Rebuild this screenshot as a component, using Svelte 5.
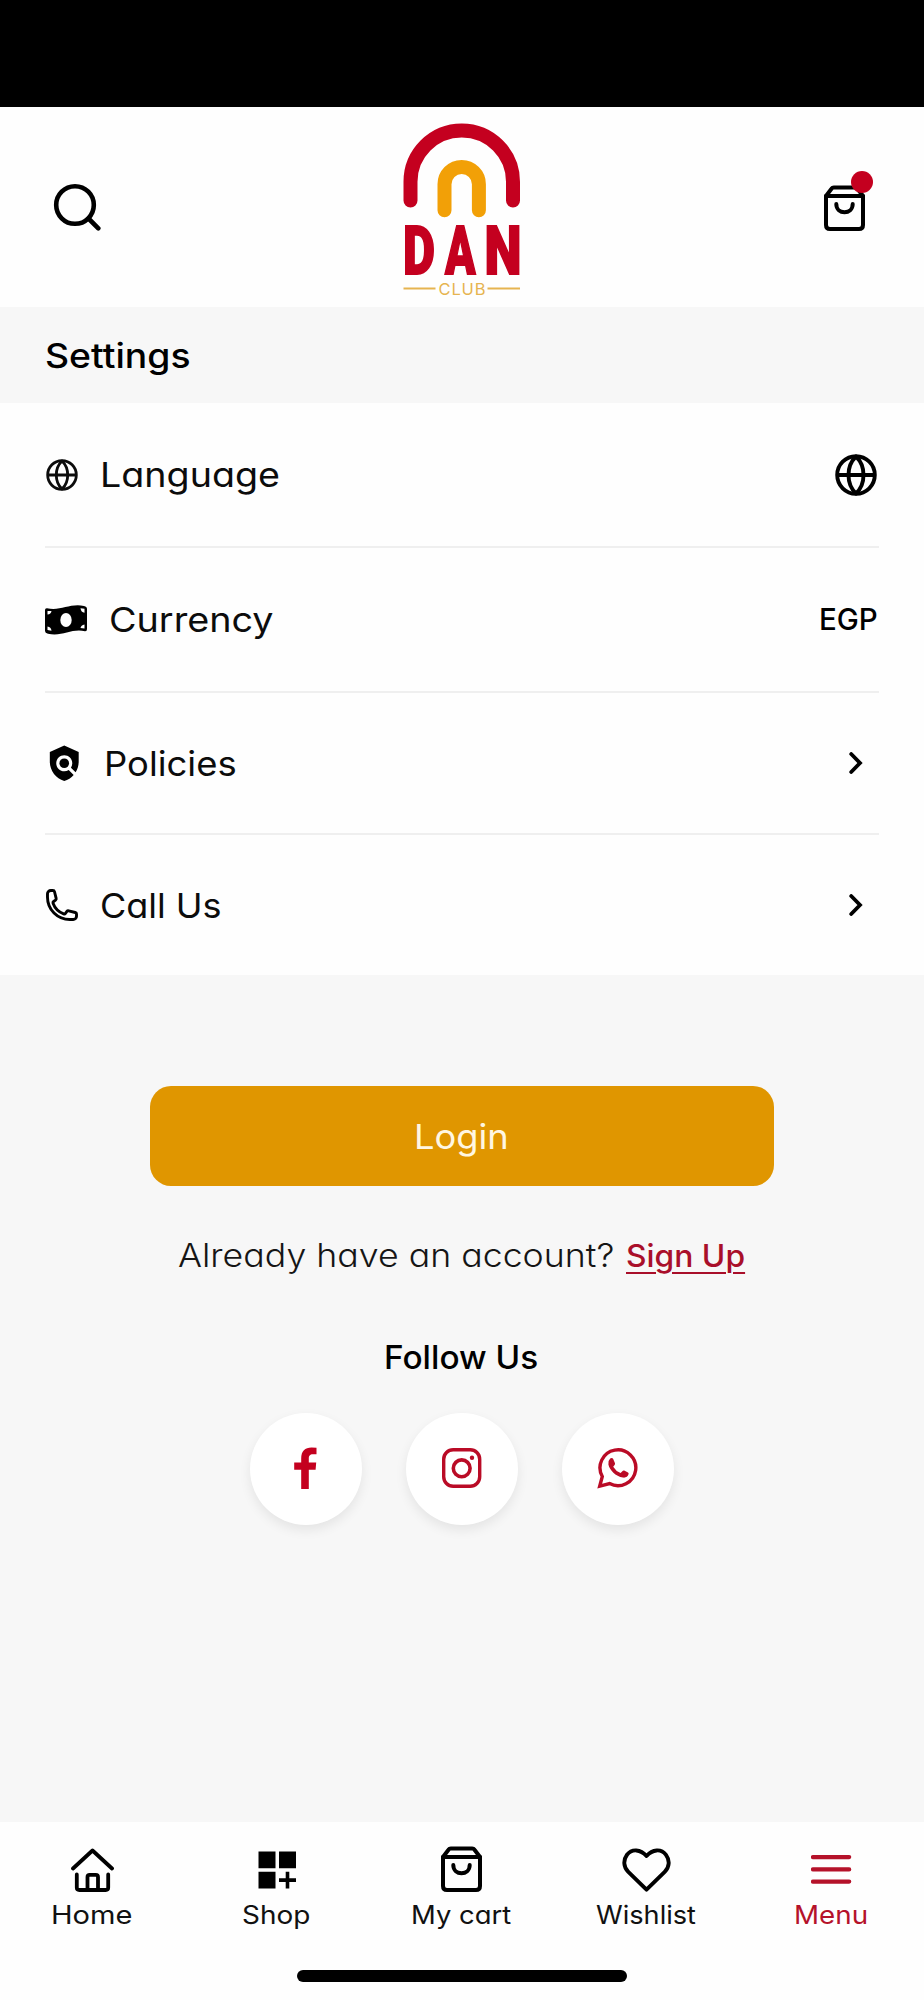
<script>
  // Widens a label horizontally so that it fills the given width.
  function fit(node, width) {
    const inner = node.firstElementChild;
    inner.style.transform = `scaleX(${width / inner.offsetWidth})`;
  }

  const tabs = [
    { id: 'home', label: 'Home', width: 81 },
    { id: 'shop', label: 'Shop', width: 68 },
    { id: 'cart', label: 'My cart', width: 100 },
    { id: 'wish', label: 'Wishlist', width: 100 },
    { id: 'menu', label: 'Menu', width: 74, active: true }
  ];
</script>

{#snippet label(text, width)}
  <span class="fit" style:width="{width}px" use:fit={width}><span>{text}</span></span>
{/snippet}

{#snippet bag()}
  <svg width="41" height="46" viewBox="0 0 41 46" fill="none" stroke="currentColor" stroke-width="4" stroke-linecap="round" stroke-linejoin="round">
    <path d="M2 11 7.500 3.700Q8.300 2.500 9.800 2.500H31.200Q32.700 2.500 33.500 3.700L39 11V40Q39 44 35 44H6Q2 44 2 40Z" />
    <path d="M2 11H39M12.300 19C12.300 30 28.700 30 28.700 19" />
  </svg>
{/snippet}

{#snippet globe(size, weight)}
  <svg width={size} height={size} viewBox="0 0 42 42" fill="none" stroke="currentColor" stroke-width={weight}>
    <circle cx="21" cy="21" r="18.800" />
    <path d="M2 21H40M21 2.500C11 12 11 30 21 39.500C31 30 31 12 21 2.500Z" stroke-linejoin="round" />
  </svg>
{/snippet}

{#snippet chevron()}
  <svg class="chevron" width="14" height="22" viewBox="0 0 14 22" fill="none" stroke="#000" stroke-width="3.800" stroke-linecap="round" stroke-linejoin="miter"><path d="M2.200 2 11 11 2.200 20" /></svg>
{/snippet}

<div class="screen">
  <div class="status"></div>

  <header>
    <button class="search" aria-label="Search">
      <svg width="48" height="48" viewBox="0 0 48 48" fill="none" stroke="#000" stroke-width="4.600" stroke-linecap="round">
        <circle cx="22" cy="22" r="18.800" /><path d="M35.500 35.500 45.300 45.300" />
      </svg>
    </button>
    <svg class="logo" width="124" height="180" viewBox="400 118 124 180">
      <g fill="none" stroke-width="14" stroke-linecap="round">
        <path stroke="#c4001f" d="M410.500 199.500V180.700A51.250 51.250 0 0 1 513 180.700V199.500" />
        <path stroke="#f2a007" d="M444.500 209.300V183.200A17.200 17.200 0 0 1 478.900 183.200V209.300" />
      </g>
      <g class="dan">
        <text x="403" y="273.300" textLength="32" lengthAdjust="spacingAndGlyphs">D</text>
        <text x="445" y="273.300" textLength="30.500" lengthAdjust="spacingAndGlyphs">A</text>
        <text x="484.500" y="273.300" textLength="37" lengthAdjust="spacingAndGlyphs">N</text>
      </g>
      <path stroke="#e6b450" stroke-width="1.800" d="M403.500 287.500H435.500M487.500 287.500H520" />
      <text class="club" x="438.500" y="293.500" textLength="47" lengthAdjust="spacing">CLUB</text>
    </svg>
    <button class="basket" aria-label="Cart">{@render bag()}<i></i></button>
  </header>

  <h1>{@render label('Settings', 146)}</h1>

  <ul>
    <li class="tall">
      <span class="glyph g-lang">{@render globe(32, 3.7)}</span>
      <span class="name">{@render label('Language', 180)}</span>
      <span class="end">{@render globe(42, 3.9)}</span>
    </li>
    <li class="tall">
      <span class="glyph g-cash">
        <svg width="42" height="30" viewBox="0 0 42 30">
          <path fill="#000" d="M0 5Q0 3 2 3.200C15 6.500 25-2 39 1Q42 1.500 42 4V24Q42 26.500 40 26.300C27 23 17 32 3 28.700Q0 28 0 26Z" />
          <ellipse cx="21" cy="15" rx="5.700" ry="7" fill="#fff" />
          <path fill="#fff" d="M2.500 6H6.500Q6 9.300 2.500 9.500ZM2.500 21.500Q6 22 6.500 25.800L2.500 25.100ZM35.500 3.300 39.500 3.800V7.700Q36 7.500 35.500 3.300ZM39.500 19.500V23.500L35.500 23Q36 20 39.500 19.500Z" />
        </svg>
      </span>
      <span class="name">{@render label('Currency', 164)}</span>
      <span class="end code">{@render label('EGP', 59)}</span>
    </li>
    <li class="third">
      <span class="glyph g-policy">
        <svg width="38.500" height="38.500" viewBox="0 0 24 24"><path d="M21 5l-9-4-9 4v6c0 5.550 3.840 10.740 9 12 2.300-.56 4.330-1.900 5.880-3.710l-3.120-3.120c-1.940 1.290-4.580 1.070-6.290-.64-1.950-1.950-1.950-5.120 0-7.070 1.950-1.950 5.120-1.950 7.070 0 1.710 1.710 1.920 4.350.64 6.290l2.900 2.900C20.290 15.690 21 13.380 21 11V5z" /><circle cx="12" cy="12" r="3" /></svg>
      </span>
      <span class="name">{@render label('Policies', 133)}</span>
      <span class="end">{@render chevron()}</span>
    </li>
    <li class="last">
      <span class="glyph g-call">
        <svg width="32" height="32" viewBox="1.250 1.250 21.500 21.500" fill="none" stroke="#000" stroke-width="1.950" stroke-linejoin="round"><path d="M2.250 6.750c0 8.284 6.716 15 15 15h2.250a2.250 2.250 0 0 0 2.250-2.250v-1.372c0-.516-.351-.966-.852-1.091l-4.423-1.106c-.44-.11-.902.055-1.173.417l-.97 1.293c-.282.376-.769.542-1.210.38a12.035 12.035 0 0 1-7.143-7.143c-.162-.441.004-.928.38-1.210l1.293-.97c.363-.271.527-.734.417-1.173L6.963 3.102a1.125 1.125 0 0 0-1.091-.852H4.500A2.250 2.250 0 0 0 2.250 4.500v2.250z" /></svg>
      </span>
      <span class="name">{@render label('Call Us', 122)}</span>
      <span class="end">{@render chevron()}</span>
    </li>
  </ul>

  <main>
    <button class="login">{@render label('Login', 95)}</button>
    <p class="account">{@render label('Already have an account?', 436)}<a href="#signup">{@render label('Sign Up', 119)}</a></p>
    <h2>{@render label('Follow Us', 154)}</h2>
    <div class="social">
      <a href="#facebook" aria-label="Facebook">
        <svg width="42" height="42" viewBox="0 0 42 42"><path fill="#c4001f" d="M16.200 42V22.700H9.200V15.500H16.200V11.500C16.200 3.800 20 .4 26.500 .4Q29.500 .4 31.500 .8V7.300H28C24.800 7.300 23.800 9 23.800 11.800V15.500H31.200L30.600 22.700H23.800V42Z" /></svg>
      </a>
      <a href="#instagram" aria-label="Instagram">
        <svg width="42" height="42" viewBox="0 0 42 42" fill="none" stroke="#ba0b26" stroke-width="3.400"><rect x="2.700" y="2.700" width="36" height="36.600" rx="9.500" /><circle cx="20.700" cy="21.300" r="8.400" stroke-width="3.600" /><circle cx="31" cy="10.800" r="2.200" fill="#ba0b26" stroke="none" /></svg>
      </a>
      <a href="#whatsapp" aria-label="WhatsApp">
        <svg width="42" height="42" viewBox="0 0 42 42"><path fill="none" stroke="#ba0b26" stroke-width="3.400" stroke-linejoin="miter" d="M2.700 39.200 5.300 29.500A17.900 17.900 0 1 1 12.600 36.600Z" /><path fill="#ba0b26" d="M13.200 11.600C14.200 10.800 15.700 10.900 16.200 12L18 16.200Q18.300 17.200 17.400 18.200L16.200 19.700Q18.700 24 23.600 26.100L25.600 23.900Q26.300 23.200 27.200 23.600L31 25.500Q31.900 26 31.600 27.100C31 29.700 28.500 31 26 30.600C18.500 29.300 12.700 23.200 11.400 17.500Q10.900 13.700 13.200 11.600Z" /></svg>
      </a>
    </div>
  </main>

  <nav>
    {#each tabs as tab}
      <a href="#{tab.id}" class:active={tab.active}>
        <span class="pic">
          {#if tab.id === 'home'}
            <svg width="44" height="46" viewBox="0 0 44 46" fill="none" stroke="#000" stroke-width="3.800" stroke-linecap="round" stroke-linejoin="round"><path d="M3 22.500 22.500 4.500 42 22.500M6.800 28.500V41.500Q6.800 44 9.300 44H35.700Q38.200 44 38.200 41.500V28.500M17.500 43.500V31Q17.500 28.800 19.700 28.800H25.800Q28 28.800 28 31V43.500" /></svg>
          {:else if tab.id === 'shop'}
            <svg width="38" height="46" viewBox="0 0 38 46"><path d="M.5 5.500H17.500V22.300H.5ZM21 5.500H38V22.300H21ZM.5 25.700H17.500V42.500H.5ZM27.700 25.700H31.300V32.300H38V35.900H31.300V42.500H27.700V35.900H21V32.300H27.700Z" /></svg>
          {:else if tab.id === 'cart'}
            {@render bag()}
          {:else if tab.id === 'wish'}
            <svg width="50" height="46" viewBox="0 0 50 46" fill="none" stroke="#000" stroke-width="3.900" stroke-linejoin="round"><path d="M24.500 10C18.500 3.100 9.800 2.500 5 8.800C1 14.200 1.500 21.100 6.300 25.800L24.500 43.700L42.700 25.800C47.500 21.100 48 14.200 44 8.800C39.200 2.500 30.500 3.100 24.500 10Z" /></svg>
          {:else}
            <svg width="41" height="46" viewBox="0 0 41 46" stroke="#b5122a" stroke-width="4.200" stroke-linecap="round"><path d="M2 11.100H38.200M2 23.400H38.200M2 35.600H38.200" /></svg>
          {/if}
        </span>
        {@render label(tab.label, tab.width)}
      </a>
    {/each}
  </nav>
  <footer><i></i></footer>
</div>

<style>
  :global(body) { background: #f7f7f7; }
  .screen {
    width: 924px; height: 2000px; overflow: hidden;
    display: flex; flex-direction: column;
    background: #f7f7f7; color: #0c0c0c;
    font-family: Inter, "Open Sans", sans-serif;
    font-feature-settings: "cv11" 1;
  }
  h1, h2, p, ul { margin: 0; padding: 0; font-weight: 400; }
  a { color: inherit; text-decoration: none; }
  button { border: 0; padding: 0; background: none; font: inherit; color: #000; font-feature-settings: inherit; }
  svg { display: block; flex: none; }
  .fit { display: block; white-space: nowrap; flex: none; text-align: left; }
  .fit > span { display: inline-block; transform-origin: 0 50%; }

  .status { height: 107px; background: #000; flex: none; }
  header {
    height: 200px; flex: none; box-sizing: border-box; background: #fefefe;
    display: grid; grid-template-columns: 1fr 124px 1fr; align-items: start;
    padding: 12px 59.500px 0;
  }
  .search { justify-self: start; margin-left: -6.500px; padding-top: 64px; }
  .logo { overflow: visible; }
  .basket { justify-self: end; margin-top: 65.500px; position: relative; }
  .basket i { position: absolute; left: 27.500px; top: -14px; width: 22px; height: 22px; border-radius: 50%; background: #c4001f; }
  .dan { font: 900 66px Roboto, sans-serif; fill: #c4001f; stroke: #c4001f; stroke-width: 1.800px; stroke-linejoin: miter; }
  .club { font: 400 16.500px Inter, sans-serif; fill: #e6b450; }

  h1 {
    height: 96px; flex: none; box-sizing: border-box; padding: 1px 0 0 44.500px;
    display: flex; align-items: center; font-size: 34px; font-weight: 500; color: #000;
  }
  ul { list-style: none; background: #fefefe; padding: 0 45px; flex: none; }
  li { display: flex; align-items: center; box-sizing: border-box; border-bottom: 2px solid #efefef; font-size: 34.500px; height: 145px; }
  .third { height: 142px; }
  .last { height: 140px; border-bottom: 0; }
  .g-lang { padding: 0 22px 0 .5px; }
  .g-cash { padding-right: 22px; }
  .g-policy { padding-right: 20.500px; }
  .g-call { padding: 0 22px 0 .5px; }
  .end { margin-left: auto; padding-right: 2.500px; color: #000; }
  .code { font-size: 30px; font-weight: 500; padding: 0 1px 2px 0; }
  .chevron { margin-right: 13.500px; }

  main { flex: 1; display: flex; flex-direction: column; align-items: center; padding-top: 111px; }
  .login {
    width: 624px; height: 100px; border-radius: 21px; background: #e09600; color: #fff6e2;
    display: flex; align-items: center; justify-content: center; font-size: 34px; font-weight: 400;
    padding-right: 1px; box-sizing: border-box;
  }
  .account { display: flex; align-items: center; height: 44px; margin-top: 47px; padding-right: 2px; gap: 12px; font-size: 32.500px; font-weight: 350; color: #151515; }
  .account a { font-size: 31px; font-weight: 500; color: #a90f2a; }
  .account a :global(.fit > span) { text-decoration: underline; text-decoration-thickness: 2px; text-underline-offset: 5px; }
  h2 { margin: 60px 2px 0 0; height: 42px; line-height: 42px; font-size: 32.500px; font-weight: 500; color: #000; }
  .social { display: flex; gap: 44px; margin-top: 34px; }
  .social a { width: 112px; height: 112px; border-radius: 50%; background: #fff; display: grid; place-items: center; box-shadow: 0 5px 12px rgb(0 0 0 / 0.080); }
  .social svg { margin: -3px 1px 0 0; }

  nav { height: 128px; flex: none; background: #fefefe; display: grid; grid-template-columns: repeat(5, 1fr); }
  nav a { display: flex; flex-direction: column; align-items: center; padding-top: 24px; font-size: 25.500px; line-height: 32px; color: #111; }
  nav .fit { margin-right: 2px; }
  .pic { height: 46px; margin-bottom: 7px; color: #000; }
  nav .active { color: #b5122a; }
  footer { height: 50px; flex: none; background: #fefefe; display: flex; justify-content: center; align-items: center; }
  footer i { width: 330px; height: 12px; border-radius: 6px; background: #000; margin-top: 2px; }
</style>
